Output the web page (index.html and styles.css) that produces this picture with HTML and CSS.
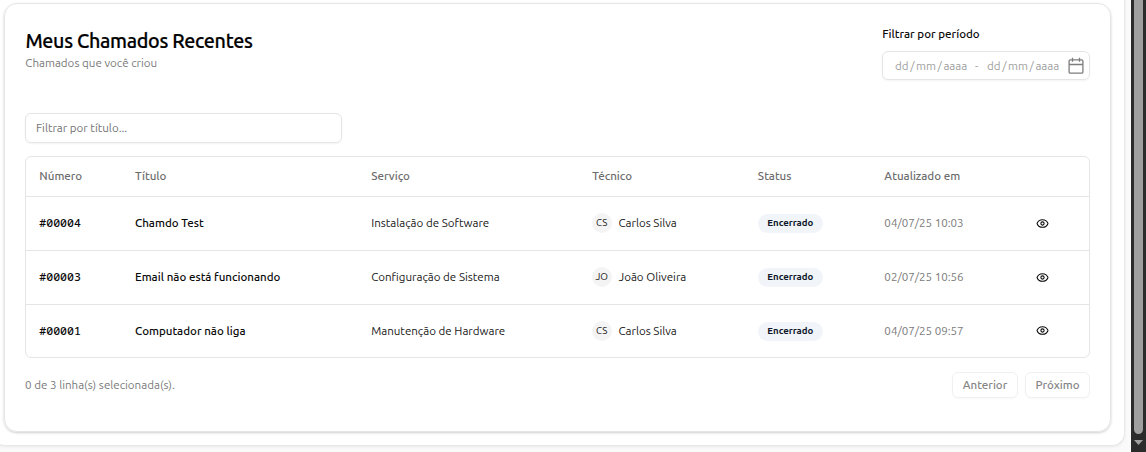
FILE: index.html
```html
<!DOCTYPE html>
<html lang="pt-BR">
<head>
<meta charset="utf-8">
<title>Meus Chamados Recentes</title>
<link rel="stylesheet" href="styles.css">
</head>
<body>
<svg class="defs" width="0" height="0"><symbol id="eye" viewBox="0 0 24 24"><path d="M2.062 12.348a1 1 0 0 1 0-.696 10.75 10.75 0 0 1 19.876 0 1 1 0 0 1 0 .696 10.75 10.75 0 0 1-19.876 0"/><circle cx="12" cy="12" r="3"/></symbol></svg>
<div class="app">
  <main class="panel">
    <section class="card">
      <header class="head">
        <div>
          <h1 class="title"><span>Meus Chamados Recentes</span></h1>
          <p class="subtitle"><span>Chamados que você criou</span></p>
        </div>
        <div class="period">
          <div class="label"><span>Filtrar por período</span></div>
          <div class="range">
            <span class="date">dd<i>/</i>mm<i>/</i>aaaa</span><span class="dash">-</span><span class="date">dd<i>/</i>mm<i>/</i>aaaa</span>
            <svg class="calendar" width="16" height="18" viewBox="0 0 16 18"><rect x="1.1" y="2.9" width="13.8" height="13.2" rx="1.2"/><path d="M1 7.5h14M4.5 .8v4M11.5 .8v4"/></svg>
          </div>
        </div>
      </header>
      <div class="search"><span>Filtrar por título...</span></div>
      <div class="table">
        <div class="row header"><span>Número</span><span>Título</span><span>Serviço</span><span>Técnico</span><span>Status</span><span>Atualizado em</span></div>
        <div class="row"><span class="num">#00004</span><span class="name">Chamdo Test</span><span class="service">Instalação de Software</span><span class="tech"><b class="avatar">CS</b>Carlos Silva</span><span><b class="badge">Encerrado</b></span><span class="when">04/07/25 10:03</span><svg class="eye"><use href="#eye"/></svg></div>
        <div class="row"><span class="num">#00003</span><span class="name">Email não está funcionando</span><span class="service">Configuração de Sistema</span><span class="tech"><b class="avatar">JO</b>João Oliveira</span><span><b class="badge">Encerrado</b></span><span class="when">02/07/25 10:56</span><svg class="eye"><use href="#eye"/></svg></div>
        <div class="row last"><span class="num">#00001</span><span class="name">Computador não liga</span><span class="service">Manutenção de Hardware</span><span class="tech"><b class="avatar">CS</b>Carlos Silva</span><span><b class="badge">Encerrado</b></span><span class="when">04/07/25 09:57</span><svg class="eye"><use href="#eye"/></svg></div>
      </div>
      <footer class="foot">
        <span class="count">0 de 3 linha(s) selecionada(s).</span>
        <div class="pager"><span class="btn">Anterior</span><span class="btn next">Próximo</span></div>
      </footer>
    </section>
  </main>
  <div class="scrollbar"><div class="thumb"></div><svg width="9" height="5" viewBox="0 0 9 5"><path d="M0 0h9L4.5 5z" fill="#9f9f9f"/></svg></div>
</div>
</body>
</html>
```
FILE: styles.css
```css
* { box-sizing: border-box; }
body { margin: 0; overflow: hidden; background: #fafafa; color: #0a0a0a; font: 11.57px/16px Ubuntu, "Noto Sans", sans-serif; white-space: nowrap; }
.defs { display: block; }
.app { display: flex; justify-content: space-between; height: 452px; }
.panel { width: 1133px; height: 458px; margin: -12px 0 0 -8px; padding: 15px 13px 0 12px; background: #fff; border: 0 solid #e8e8e8; border-width: 0 1px 1px 0; border-radius: 13px; box-shadow: 0 1px 3px rgba(0,0,0,.07); }
.card { width: 1107px; height: 429px; padding: 24px 20px 0; border: 1px solid #e5e5e5; border-radius: 13px; box-shadow: 0 1px 3px rgba(0,0,0,.12), 0 1px 2px rgba(0,0,0,.08); }
.head { display: flex; justify-content: space-between; height: 85px; }
.title { margin: 0; padding-left: .4px; font-size: 19.7px; line-height: 26px; font-weight: 500; letter-spacing: -.32px; color: #000; -webkit-text-stroke: .2px; }
.subtitle { margin: 1px 0 0; padding-left: .3px; color: #7a7a7a; }
.period { width: 208px; margin-top: -2px; }
.label { height: 25px; padding-left: .3px; color: #0a0a0a; font-weight: 500; }
.range { display: flex; align-items: center; height: 29px; padding: 0 5.5px 0 12px; border: 1px solid #e5e5e5; border-radius: 6px; color: #a0a0a0; box-shadow: 0 1px 2px rgba(0,0,0,.05); }
.date { width: 74px; }
.date i { font-style: normal; padding: 0 1.6px; }
.dash { width: 18px; padding-left: 6px; }
.calendar { margin-left: auto; fill: none; stroke: #7d7d7d; stroke-width: 1.3; }
.search { width: 317px; height: 30px; padding: 6px 10px; border: 1px solid #e5e5e5; border-radius: 6px; color: #737373; box-shadow: 0 1px 2px rgba(0,0,0,.05); }
.table { height: 202px; margin-top: 13px; border: 1px solid #e5e5e5; border-radius: 6px; }
.row { display: grid; grid-template-columns: 95.7px 236.2px 221px 165.7px 126.5px 151.3px 1fr; align-items: center; height: 54px; padding: 0 0 1px 13.3px; border-bottom: 1px solid #e5e5e5; color: #202020; }
.header { height: 40px; color: #6d6d6d; font-weight: 500; }
.last { height: 52px; padding-bottom: 0; border: 0; }
.num { font: 500 11.57px/16px "Noto Sans Mono", "DejaVu Sans Mono", monospace; color: #0a0a0a; }
.name { color: #0a0a0a; font-weight: 500; }
.tech { display: flex; align-items: center; }
.avatar { width: 20px; height: 20px; margin-right: 6.3px; padding-right: 1px; border-radius: 50%; background: #f4f4f4; text-align: center; font-size: 9.9px; line-height: 19px; font-weight: 400; }
.badge { display: block; width: 65px; height: 19px; border-radius: 10px; background: #f1f5f9; color: #0f172a; text-align: center; font-size: 9.65px; line-height: 18px; font-weight: 600; }
.when { color: #7a7a7a; }
.eye { width: 13px; height: 13px; margin-left: .4px; fill: none; stroke: #0a0a0a; stroke-width: 2; stroke-linecap: round; stroke-linejoin: round; }
.last .eye { margin-bottom: 1px; }
.foot { display: flex; justify-content: space-between; align-items: center; height: 26px; margin-top: 14px; color: #7a7a7a; }
.pager { display: flex; gap: 7px; }
.btn { width: 66px; height: 26px; border: 1px solid #f0f0f0; border-radius: 6px; text-align: center; line-height: 24px; font-weight: 500; color: #858585; box-shadow: 0 1px 2px rgba(0,0,0,.03); }
.next { width: 65px; }
.scrollbar { display: flex; flex-direction: column; align-items: center; width: 15px; background: #2b2b2b; }
.thumb { width: 9px; height: 434px; margin-bottom: 6px; border-radius: 0 0 5px 5px; background: #9f9f9f; }
```
